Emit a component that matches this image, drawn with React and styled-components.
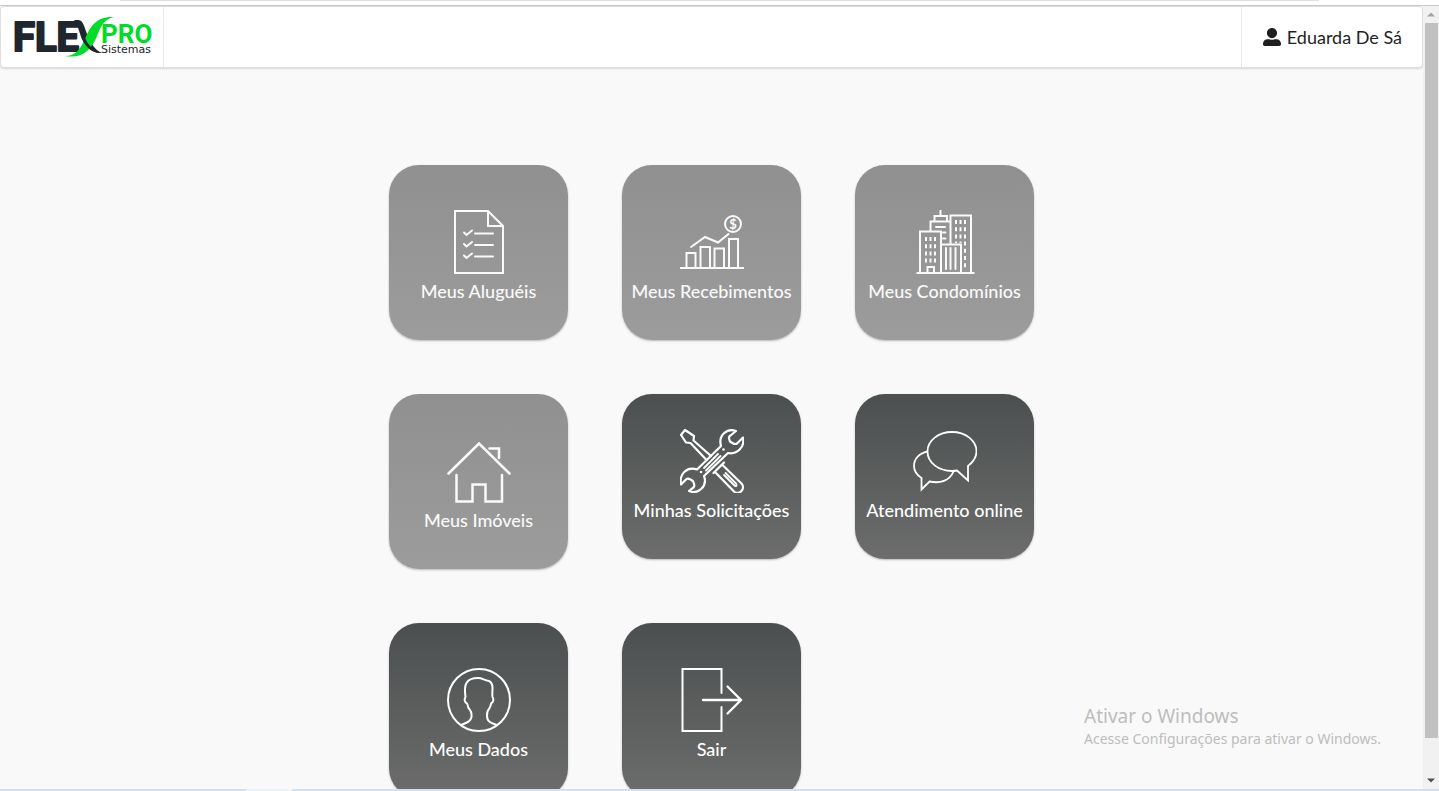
import { FaUserAlt } from 'react-icons/fa'
import styled, { createGlobalStyle } from 'styled-components'

const ContractIcon = () => (
  <Icon>
    <path d="M8 1H41L56 16V63H8Z M41 1V16H56" />
    <g strokeLinecap="round">
      <path d="M17 22.5L19.5 25L25 20.5M28 23.5H46" />
      <path d="M17 34L19.5 36.5L25 32M28 35H46" />
      <path d="M17 45.5L19.5 48L25 43.5M28 46.5H46" />
    </g>
  </Icon>
)

const ChartIcon = () => (
  <Icon>
    <path d="M0 58H64" />
    <path d="M6.5 58V43H15.5V58 M20.5 58V37H30V58 M34.5 58V38.5H44V58 M49 58V29H58V58" />
    <path strokeLinecap="round" d="M11 37L25 27L38 32.5L48.5 24" />
    <circle cx="53" cy="14" r="8" />
    <Currency x="53" y="18.5">
      $
    </Currency>
  </Icon>
)

const BuildingsIcon = () => (
  <Icon>
    <path d="M3.5 63H61.5 M7 63V21.5H28V63 M17.5 21V11.5H37 M21.5 11V6H34V11 M27.5 6V0" />
    <path d="M37.5 34V5.5H58V63 M28 34.5H48V63 M14.5 63V57H21V63" />
    <path
      strokeLinecap="round"
      d="M33 38V59 M37.5 38V59 M42.5 38V59 M23 17H32 M30 22.5H32.5 M30 28.5H32.5"
    />
    <g strokeDasharray="4 3.2">
      <path d="M13 27V53.5 M17.5 27V53.5 M22 27V53.5" />
      <path d="M43 10V33 M47.5 10V33 M52 10V58" />
    </g>
  </Icon>
)

const HouseIcon = () => (
  <Icon>
    <g strokeLinecap="round" strokeWidth="2.5">
      <path d="M1.5 34.5L32 4.5L62.5 34.5" />
      <path d="M42.5 9.5H52V19" />
      <path d="M9.5 36V62.5H25.5V45.5H38.5V62.5H55V36" />
    </g>
  </Icon>
)

const ToolsIcon = () => (
  <Icon>
    <g strokeLinejoin="round" strokeLinecap="round" strokeWidth="2.2">
      <path d="M31 27L13.5 11.5L14 7L5 1L1 6L6 13.5L10.5 14L26.5 31" />
      <path d="M44 33.5L33.5 44 M42 35.5L61.5 54.5A5.5 5.5 0 0 1 54 62.5L35 43" />
      <path
        strokeWidth="1.8"
        d="M45.5 44L56 54.5C57.5 56.5 56 58 54.5 56.5L44 46"
      />
      <path d="M56 2C47-1 38 6 41 17L17 40.5C7 37 -1 45 1 55.5L6 50.5C8 48.5 10 50 13 52C14 55 15.5 57 13.5 58.5L9 62C18 66 28 57 24 47L48 24C57 26 65 18 63 8.5L57 14.5C55 16 52 14 50 12.5C49 9 48 8 50.5 6.5Z" />
      <path strokeWidth="1.8" d="M24 39L38 25 M26 41.5L40.5 27" />
    </g>
    <g fill="currentColor" stroke="none">
      <circle cx="43.5" cy="20.5" r="1.3" />
      <circle cx="21" cy="43" r="1.3" />
    </g>
  </Icon>
)

const ChatIcon = () => (
  <Icon>
    <g strokeWidth="1.8">
      <path d="M55 37C60 33 63.5 28 63.5 22.5C63.5 11.5 52.5 3 39 3S14.5 11.5 14.5 22.5S25.5 42 39 42C41 42 42.5 41.8 44 41.5L55 51.5Z" />
      <path d="M14.5 22.5C6 24.5 1 30 1 37C1 42 4 46 8.5 49V60.5L16.5 52.5C28 55 37 51 40.5 42.5" />
    </g>
  </Icon>
)

const ProfileIcon = () => (
  <Icon>
    <circle cx="32" cy="32" r="31" />
    <path d="M14 57C19 55 23.5 54 24.5 49C25 44 23.5 42 21.5 40C20.5 38 21 36 19.5 35C17.5 34 17 31 18.5 29C18 24 17 19 19.5 15C22 10.5 27 10 31 10C35 10 37 12 40 12.5C44 13 45.5 16 45.5 20C45.5 24 45 26 45.5 29C47 31 46.5 34 44.5 35C43.5 36 44 38 42.5 40C41 42 39.5 44 40 48C40 54 44 55 50 57" />
  </Icon>
)

const ExitIcon = () => (
  <Icon>
    <g strokeLinecap="round">
      <path d="M41.5 25V1H2.5V63H41.5V39" />
      <path
        strokeWidth="2.3"
        d="M23 32H61 M47.5 18.5L61 32L47.5 45.5"
      />
    </g>
  </Icon>
)

const tiles = [
  { label: 'Meus Aluguéis', icon: ContractIcon, disabled: true },
  { label: 'Meus Recebimentos', icon: ChartIcon, disabled: true },
  { label: 'Meus Condomínios', icon: BuildingsIcon, disabled: true },
  { label: 'Meus Imóveis', icon: HouseIcon, disabled: true },
  { label: 'Minhas Solicitações', icon: ToolsIcon, compact: true },
  { label: 'Atendimento online', icon: ChatIcon, compact: true },
  { label: 'Meus Dados', icon: ProfileIcon },
  { label: 'Sair', icon: ExitIcon },
]

const Logo = () => (
  <LogoSvg viewBox="0 0 140 42" role="img" aria-label="FlexPro Sistemas">
    <LogoText x="-1" y="35" $size={40} $outline={2} $color="#20262d">
      FLE
    </LogoText>
    <LogoText x="87" y="27" $size={26} $color="#00dc28">
      PRO
    </LogoText>
    <Tagline x="87" y="37">
      Sistemas
    </Tagline>
    <path
      fill="#20262d"
      d="M60 4H64C69 4 70 10 73 18C77 28 81 34 88 37C78 37 72 31 68 23C65 16 64 9 60 4Z"
    />
    <path
      fill="#00dc28"
      d="M51 40C62 40 66 33 71 23C76 11 82 0 100 1C90 3 87 10 83 20C77 34 69 43 51 40Z"
    />
    <path fill="#20262d" d="M69 16C72 28 79 35 88 37C77 38 70 29 67 20Z" />
  </LogoSvg>
)

const App = () => (
  <Screen>
    <GlobalStyle />
    <BrowserEdge>
      <AddressBar />
    </BrowserEdge>
    <Viewport>
      <Page>
        <Menu>
          <LogoLink href="#">
            <Logo />
          </LogoLink>
          <UserLink href="#">
            <FaUserAlt size={18} />
            Eduarda De Sá
          </UserLink>
        </Menu>
        <Grid>
          {tiles.map(({ label, icon: TileIcon, disabled, compact }) => (
            <Tile key={label} disabled={disabled} $compact={compact}>
              <TileIcon />
              {label}
            </Tile>
          ))}
        </Grid>
      </Page>
      <Scrollbar>
        <Arrow viewBox="0 0 16 16">
          <path fill="#a3a3a3" d="M4 10L8 6L12 10Z" />
        </Arrow>
        <Thumb />
        <Arrow viewBox="0 0 16 16">
          <path fill="#505050" d="M4 6L8 10L12 6Z" />
        </Arrow>
      </Scrollbar>
      <Watermark>
        <WatermarkTitle>Ativar o Windows</WatermarkTitle>
        <WatermarkText>
          Acesse Configurações para ativar o Windows.
        </WatermarkText>
      </Watermark>
    </Viewport>
    <Taskbar>
      <TaskbarItem />
    </Taskbar>
  </Screen>
)

export default App

const GlobalStyle = createGlobalStyle`
  * {
    box-sizing: border-box;
  }
  body {
    margin: 0;
    font-family: Lato, 'Liberation Sans', sans-serif;
    background-color: #f9f9f9;
  }
`

const Screen = styled.div`
  display: flex;
  flex-direction: column;
  height: 100vh;
  overflow: hidden;
`

const BrowserEdge = styled.div`
  flex: none;
  height: 6px;
  padding: 0 120px;
  background-color: #fff;
  border-bottom: 1px solid #c8c8c8;
`

const AddressBar = styled.div`
  height: 1px;
  background-color: #dfdfdf;
`

const Viewport = styled.div`
  position: relative;
  flex: 1;
  display: flex;
  min-height: 0;
`

const Page = styled.main`
  flex: 1;
  overflow: hidden;
`

const Menu = styled.nav`
  display: flex;
  justify-content: space-between;
  height: 62px;
  background-color: #fff;
  border: 1px solid #dededf;
  border-radius: 4px;
  box-shadow: 0 1px 2px 0 rgba(34, 36, 38, 0.15);
`

const MenuLink = styled.a`
  display: flex;
  align-items: center;
  color: #1f1f1f;
  text-decoration: none;
`

const LogoLink = styled(MenuLink)`
  padding: 0 9px 0 13px;
  border-right: 1px solid #e9e9e9;
`

const UserLink = styled(MenuLink)`
  gap: 6px;
  padding: 0 20px 0 21px;
  font-size: 18px;
  border-left: 1px solid #e9e9e9;
`

const LogoSvg = styled.svg`
  width: 140px;
  height: 42px;
  overflow: visible;
`

const LogoText = styled.text`
  font-family: Roboto, 'Liberation Sans', sans-serif;
  font-weight: 700;
  font-size: ${(props) => props.$size}px;
  fill: ${(props) => props.$color};
  stroke: ${(props) => props.$color};
  stroke-width: ${(props) => props.$outline || 0};
  stroke-linejoin: round;
`

const Tagline = styled.text`
  font-family: 'DejaVu Sans', sans-serif;
  font-size: 11px;
  fill: #20262d;
`

const Grid = styled.section`
  display: grid;
  grid-template-columns: repeat(3, 179px);
  justify-content: center;
  align-items: start;
  gap: 54px;
  padding: 97px 0 54px;
`

const Tile = styled.button`
  display: flex;
  flex-direction: column;
  align-items: center;
  gap: 7px;
  padding: ${(props) => (props.$compact ? '35px' : '45px')} 0 39px;
  font-family: inherit;
  font-size: 18px;
  font-weight: 500;
  line-height: 20px;
  white-space: nowrap;
  color: #fff;
  background-image: linear-gradient(#4b4f4f, #6c6d6c);
  border: none;
  border-radius: 30px;
  box-shadow: 0 1px 2px 0 rgba(34, 36, 38, 0.3);
  cursor: pointer;
  &:disabled {
    color: #fafafa;
    background-image: linear-gradient(#909090, #9c9c9c);
    cursor: default;
  }
`

const Icon = styled.svg.attrs({ viewBox: '0 0 64 64', 'aria-hidden': true })`
  width: 64px;
  height: 64px;
  fill: none;
  stroke: currentColor;
  stroke-width: 2;
`

const Currency = styled.text`
  font-size: 13px;
  font-weight: 700;
  text-anchor: middle;
  fill: currentColor;
  stroke: none;
`

const Scrollbar = styled.div`
  display: flex;
  flex-direction: column;
  width: 16px;
  background-color: #f1f1f1;
`

const Arrow = styled.svg`
  flex: none;
  width: 16px;
  height: 17px;
`

const Thumb = styled.div`
  flex: 1;
  margin: 0 1px 34px 2px;
  background-color: #c1c1c1;
`

const Watermark = styled.aside`
  position: absolute;
  right: 58px;
  bottom: 40px;
  font-family: 'Noto Sans', 'Open Sans', sans-serif;
  color: #bdbdbd;
`

const WatermarkTitle = styled.p`
  margin: 0;
  font-size: 19px;
  line-height: 26px;
`

const WatermarkText = styled.p`
  margin: 0;
  font-size: 14px;
  line-height: 20px;
`

const Taskbar = styled.footer`
  flex: none;
  height: 2px;
  padding-left: 246px;
  background-color: #d3e2ea;
`

const TaskbarItem = styled.div`
  width: 46px;
  height: 2px;
  background-color: #edf4f8;
`
